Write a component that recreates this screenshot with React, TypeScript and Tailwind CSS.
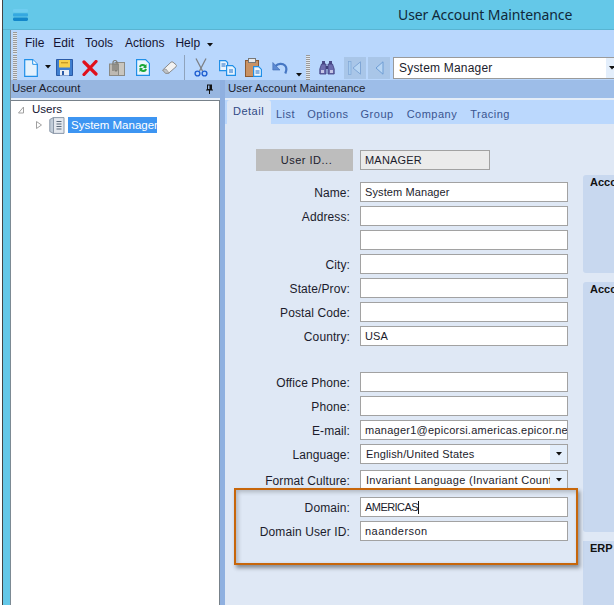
import React from "react";

const F = "font-['Liberation_Sans','Noto_Sans',sans-serif]";

function Grip({ h }: { h: string }) {
  return <div className={`w-[4px] ${h} bg-[repeating-linear-gradient(to_bottom,#9a9a9a_0,#9a9a9a_1px,#dfe6ee_1px,#dfe6ee_2px)]`} />;
}

function Caret({ className = "" }: { className?: string }) {
  return (
    <svg width="6" height="4" viewBox="0 0 6 4" className={className}>
      <path d="M0 0h6L3 3.5z" fill="#111" />
    </svg>
  );
}

const Doc = () => (
  <svg width="14" height="18" viewBox="0 0 14 18">
    <path d="M.7.7h8l4.6 4.6v12H.7z" fill="#e4f1fd" stroke="#1f8fe8" strokeWidth="1.2" />
    <path d="M8.7.7v4.6h4.6" fill="#fff" stroke="#1f8fe8" />
  </svg>
);
const Save = () => (
  <svg width="17" height="17" viewBox="0 0 17 17">
    <path d="M.5.5h16v16H.5z" fill="#3f7fd0" stroke="#2a5aa6" />
    <rect x="3" y="1" width="11" height="7.500" fill="#f6cf4a" />
    <rect x="5" y="3" width="7" height="1.400" fill="#c79a24" />
    <rect x="4" y="11" width="9" height="5.500" fill="#e8eef7" />
    <rect x="6" y="12" width="2" height="4" fill="#2a5aa6" />
  </svg>
);
const Del = () => (
  <svg width="16" height="16" viewBox="0 0 16 16">
    <path d="M2 2l12 12M14 1.500L2 14.500" stroke="#e0101c" strokeWidth="3.200" strokeLinecap="round" />
  </svg>
);
const Clip = () => (
  <svg width="16" height="17" viewBox="0 0 16 17">
    <rect x="6" y="3.500" width="9.500" height="13" fill="#c9c6bf" stroke="#8b8b85" />
    <rect x=".5" y="5" width="9" height="11.500" fill="#bdb9b2" stroke="#8b8b85" />
    <path d="M4 12V3.500a2 2 0 014 0V11a1 1 0 01-2 0V5" fill="none" stroke="#77766f" strokeWidth="1.200" />
  </svg>
);
const Refresh = () => (
  <svg width="14" height="17" viewBox="0 0 14 17">
    <path d="M.6.6h9l3.800 3.800v12H.6z" fill="#eaf5fd" stroke="#1f8fe8" strokeWidth="1.200" />
    <path d="M3 7.500a4 4 0 016.500-1.500l1-1v4H7l1.200-1.200A2.400 2.400 0 004.600 8.500z" fill="#1da83a" />
    <path d="M11 10.500a4 4 0 01-6.500 1.500l-1 1V9H7L5.800 10.200A2.400 2.400 0 009.400 9.500z" fill="#1da83a" />
  </svg>
);
const Eraser = () => (
  <svg width="15" height="13" viewBox="0 0 15 13">
    <path d="M.7 9L9 1.200a1.500 1.500 0 012 0l3 2.500a1.500 1.500 0 010 2.100L6.500 12.300H3.500z" fill="#f2f2f2" stroke="#8a8a8a" />
    <path d="M.7 9l3 3.300 3.500-.2L4 8z" fill="#bfc3c8" stroke="#8a8a8a" strokeWidth=".6" />
  </svg>
);
const Scissors = () => (
  <svg width="14" height="19" viewBox="0 0 14 19">
    <path d="M2 .5l6.500 12.500M12 .5L5.500 13" stroke="#7d8086" strokeWidth="1.300" fill="none" />
    <circle cx="3.500" cy="15.500" r="2.400" fill="none" stroke="#1f5fd0" strokeWidth="1.400" />
    <circle cx="10.500" cy="15.500" r="2.400" fill="none" stroke="#1f5fd0" strokeWidth="1.400" />
  </svg>
);
const Copy = () => (
  <svg width="17" height="16" viewBox="0 0 17 16">
    <path d="M.6.6h6l2 2v8H.6z" fill="#e8f3fd" stroke="#1f8fe8" strokeWidth="1.200" />
    <path d="M7.600 5.600h6l2.800 2.800v7H7.600z" fill="#e8f3fd" stroke="#1f8fe8" strokeWidth="1.200" />
    <path d="M2.500 4h4M2.500 6h4M10 10h4M10 12h4" stroke="#1f6fc8" />
  </svg>
);
const Paste = () => (
  <svg width="17" height="19" viewBox="0 0 17 19">
    <rect x=".5" y="2.500" width="13" height="16" fill="#c99264" stroke="#8a5a34" />
    <rect x="3.500" y=".5" width="7" height="4" fill="#e9e9e9" stroke="#777" />
    <path d="M8.600 8.600h5l2.800 2.800v7H8.600z" fill="#eef6fd" stroke="#1f8fe8" strokeWidth="1.200" />
    <path d="M10.500 13h4M10.500 15h4" stroke="#1f6fc8" />
  </svg>
);
const Undo = () => (
  <svg width="16" height="14" viewBox="0 0 16 14">
    <path d="M3.500 5C6 2.500 10.500 2 13 4.500c1.800 1.800 1.800 4.500.3 8" fill="none" stroke="#4677c4" strokeWidth="2.200" />
    <path d="M.8 1.500v7.500h7.200z" fill="#5d8ad2" stroke="#3e6ab4" strokeWidth=".6" />
  </svg>
);
const Binoculars = () => (
  <svg width="16" height="15" viewBox="0 0 16 15">
    <path d="M3 1h3v3H3zM10 1h3v3h-3z" fill="#4b4b88" />
    <path d="M2.500 4h4.500v10H.8v-5zM9 4h4.500l1.700 5v5H9z" fill="#6c6cae" stroke="#3d3d7c" strokeWidth=".8" />
    <path d="M7 6h2v3H7z" fill="#3d3d7c" />
    <path d="M2 10h3v3H2zM11 10h3v3h-3z" fill="#c6c6e6" />
  </svg>
);
const NavFirst = () => (
  <svg width="14" height="14" viewBox="0 0 14 14">
    <rect x=".5" y=".5" width="2.500" height="13" fill="#a8cdf0" stroke="#7fa6d6" strokeWidth=".7" />
    <path d="M12.500 .8v12.400L5 7z" fill="#b8d6f4" stroke="#7fa6d6" />
  </svg>
);
const NavPrev = () => (
  <svg width="9" height="14" viewBox="0 0 9 14">
    <path d="M8 .8v12.400L1 7z" fill="#b8d6f4" stroke="#6f9dd4" />
  </svg>
);
const Pin = () => (
  <svg width="7" height="10" viewBox="0 0 7 10">
    <path d="M1 .5h5v5H7v1H4V10H3V6.500H0v-1h1z" fill="#111" />
    <rect x="2" y="1.500" width="1.500" height="3.500" fill="#97b6e0" />
  </svg>
);
const Book = () => (
  <svg width="16" height="17" viewBox="0 0 16 17">
    <path d="M4 .6h11v15.800H4z" fill="#e4e8ee" stroke="#8b98a8" />
    <path d="M.8 2.500L4.500.6v15.800L.8 14.500z" fill="#c1ccd8" stroke="#8b98a8" />
    <path d="M7.500 4.500h5M7.500 7h5M7.500 9.500h5M7.500 12h5" stroke="#5a6878" />
  </svg>
);
const TreeTri = ({ open }: { open?: boolean }) => (
  <svg width="6" height="8" viewBox="0 0 6 8">
    {open ? <path d="M5.500 1v6H.5z" fill="none" stroke="#a0a0a0" /> : <path d="M.5.5L5.500 4 .5 7.500z" fill="#fff" stroke="#a0a0a0" />}
  </svg>
);
const AppIcon = () => (
  <svg width="15" height="12" viewBox="0 0 15 12">
    <rect x="0" y="0" width="15" height="3.300" rx="1.300" fill="#6fcdf0" />
    <rect x="0" y="4.300" width="15" height="3.300" rx="1" fill="#35a8e0" />
    <rect x="0" y="8.600" width="15" height="3.300" rx="1.300" fill="#1387ca" />
  </svg>
);

function Field({ label, value, textClass = "tracking-[0.15px]", children }: { label?: string; value?: string; textClass?: string; children?: React.ReactNode }) {
  return (
    <div className="flex items-center h-5">
      <div className="w-[125px] pt-[1px] text-right text-[12px] tracking-[0.1px] text-[#1c1c2c] whitespace-nowrap">{label}</div>
      <div className={`ml-[10px] w-[208px] h-5 bg-white border border-[#a2a2a2] pl-1 flex items-center text-[11px] text-[#1c1c2c] whitespace-nowrap overflow-hidden ${textClass}`}>
        {value}
        {children}
      </div>
    </div>
  );
}

function Select({ label, value, textClass = "tracking-[0.15px]" }: { label: string; value: string; textClass?: string }) {
  return (
    <div className="flex items-center h-5">
      <div className="w-[125px] pt-[1px] text-right text-[12px] tracking-[0.1px] text-[#1c1c2c] whitespace-nowrap">{label}</div>
      <div className={`ml-[10px] w-[208px] h-5 bg-white border border-[#a2a2a2] flex items-center text-[11px] text-[#1c1c2c] whitespace-nowrap ${textClass}`}>
        <div className="w-[189px] pl-[5px] overflow-hidden">{value}</div>
        <div className="flex-1 h-full bg-[#e3eefb] flex items-center justify-center">
          <Caret />
        </div>
      </div>
    </div>
  );
}

export default function App() {
  return (
    <div className={`relative w-[614px] h-[605px] overflow-hidden bg-white pl-[2px] ${F}`}>
      <div className="h-full border-l border-[#444444] bg-[#64c8e8] flex flex-col">
        <div className="h-[30px] shrink-0 flex items-center pl-[10px] border-b border-[#58b4d2]">
          <AppIcon />
          <div className="ml-[370px] text-[14px] tracking-[-0.1px] text-[#10283a] whitespace-nowrap font-['Noto_Sans',sans-serif]">
            User Account Maintenance
          </div>
        </div>
        <div className="flex-1 ml-[7px] border-l border-[#7c8a94] min-h-0 flex flex-col bg-[#dfe8f5]">
          {/* menu + toolbar */}
          <div className="h-[50px] shrink-0 bg-[#b9d7fd] flex flex-col">
            <div className="h-[25px] flex items-center pl-[2px] text-[12px] text-[#141432]">
              <Grip h="h-[22px]" />
              <span className="ml-[8px]">File</span>
              <span className="ml-[9px]">Edit</span>
              <span className="ml-[11px]">Tools</span>
              <span className="ml-[12px]">Actions</span>
              <span className="ml-[11px]">Help</span>
              <Caret className="ml-[7px] mt-[4px]" />
            </div>
            <div className="h-[25px] flex items-center pl-[2px]">
              <Grip h="h-[25px]" />
              <div className="ml-[7px]"><Doc /></div>
              <Caret className="ml-[7px] -mt-[2px]" />
              <div className="ml-[5px]"><Save /></div>
              <div className="ml-[9px]"><Del /></div>
              <div className="ml-[11px]"><Clip /></div>
              <div className="ml-[11px]"><Refresh /></div>
              <div className="ml-[12px]"><Eraser /></div>
              <div className="ml-[7px] w-px h-[26px] bg-[#8fa3bc]" />
              <div className="ml-[9px]"><Scissors /></div>
              <div className="ml-[11px]"><Copy /></div>
              <div className="ml-[9px]"><Paste /></div>
              <div className="ml-[10px]"><Undo /></div>
              <Caret className="ml-[8px] mt-[14px]" />
              <div className="ml-[4px]"><Grip h="h-[25px]" /></div>
              <div className="ml-[9px]"><Binoculars /></div>
              <div className="ml-[9px] w-[22px] h-[22px] bg-[#a9c6e8] flex items-center justify-center"><NavFirst /></div>
              <div className="ml-[2px] w-[22px] h-[22px] bg-[#a9c6e8] flex items-center justify-center"><NavPrev /></div>
              <div className="ml-[3px] flex-1 h-[22px] min-w-0 bg-white border border-[#9a9a9a] border-r-0 flex items-center">
                <span className="pl-[5px] text-[12px] tracking-[0.2px] text-[#1c1c2c] flex-1">System Manager</span>
                <div className="w-[8px] h-full bg-[#e3eefb] flex items-center overflow-hidden">
                  <Caret className="ml-[3px] shrink-0" />
                </div>
              </div>
            </div>
          </div>

          <div className="flex-1 min-h-0 flex">
            {/* left dock */}
            <div className="w-[209px] shrink-0 flex flex-col bg-[#97b6e0]">
              <div className="h-[18px] shrink-0 flex items-center justify-between pl-[1px] pr-[7px] text-[11.5px] text-[#1c1c2c]">
                <span>User Account</span>
                <Pin />
              </div>
              <div className="h-[2px] shrink-0 bg-[#e4edf8]" />
              <div className="flex-1 bg-white border-t border-r border-[#77818a] pt-[2px] text-[11.5px]">
                <div className="h-[14px] flex items-center pl-[7px] text-[#141432]">
                  <TreeTri open />
                  <span className="ml-[8px]">Users</span>
                </div>
                <div className="h-4 flex items-center pl-[25px] text-white">
                  <TreeTri />
                  <div className="ml-[7px]"><Book /></div>
                  <span className="ml-[3px] h-4 w-[89px] pl-[3px] bg-[#3d95f2] leading-4 whitespace-nowrap">System Manager</span>
                </div>
              </div>
            </div>
            <div className="w-[5px] shrink-0 bg-[#8fb0e0]" />
            {/* main */}
            <div className="flex-1 min-w-0 flex flex-col">
              <div className="h-[18px] shrink-0 bg-[#9dbde8] flex items-center pl-[3px] text-[11.5px] text-[#1c1c2c] whitespace-nowrap">
                User Account Maintenance
              </div>
              <div className="h-[2px] shrink-0 bg-[#e4edf8]" />
              <div className="h-[24px] shrink-0 bg-[#bbd8fd] flex items-end pl-[2px] text-[11px] tracking-[0.5px] text-[#3a5590]">
                <div className="w-[44px] h-[24px] bg-[#dfe8f5] rounded-t-[3px] pl-[6px] leading-[22px] text-[#2f4a86]">Detail</div>
                <span className="ml-[5px] h-[24px] leading-[28px]">List</span>
                <span className="ml-[12px] h-[24px] leading-[28px]">Options</span>
                <span className="ml-[12px] h-[24px] leading-[28px]">Group</span>
                <span className="ml-[13px] h-[24px] leading-[28px]">Company</span>
                <span className="ml-[13px] h-[24px] leading-[28px]">Tracing</span>
              </div>
              <div className="flex-1 min-h-0 flex">
                <div className="w-[358px] shrink-0 pt-[25px] flex flex-col">
                  <div className="flex items-center h-[22px] mb-[11px]">
                    <div className="ml-[31px] w-[97px] h-[22px] pl-[4px] bg-[#bdbdbd] text-center text-[11px] tracking-[0.5px] leading-[22px] text-[#1c1c2c]">User ID...</div>
                    <div className="ml-[7px] w-[130px] h-5 bg-[#ebebeb] border border-[#a2a2a2] pl-1 text-[11px] tracking-[0.2px] leading-[18px] text-[#1c1c2c]">MANAGER</div>
                  </div>
                  <div className="flex flex-col gap-1">
                    <Field label="Name:" value="System Manager" textClass="tracking-[0.1px]" />
                    <Field label="Address:" />
                    <Field />
                    <Field label="City:" />
                    <Field label="State/Prov:" />
                    <Field label="Postal Code:" />
                    <Field label="Country:" value="USA" />
                  </div>
                  <div className="mt-[26px] flex flex-col gap-1">
                    <Field label="Office Phone:" />
                    <Field label="Phone:" />
                    <Field label="E-mail:" value="manager1@epicorsi.americas.epicor.net" textClass="tracking-[0.25px]" />
                    <Select label="Language:" value="English/United States" />
                  </div>
                  <div className="mt-[6px]">
                    <Select label="Format Culture:" value="Invariant Language (Invariant Country)" textClass="tracking-[0.3px]" />
                  </div>
                  <div className="mt-[7px] flex flex-col gap-1">
                    <Field label="Domain:" value="AMERICAS" textClass="tracking-[-0.55px]">
                      <span className="w-px h-[13px] bg-[#111]" />
                    </Field>
                    <Field label="Domain User ID:" value="naanderson" textClass="tracking-[0.45px]" />
                  </div>
                </div>
                <div className="flex-1 min-w-0 pt-[51px] flex flex-col text-[11px] font-bold text-[#111] whitespace-nowrap">
                  <div className="h-[98px] shrink-0 bg-[#c8d8ef] rounded-l-[3px] pl-[7px] pt-[1px] leading-[12px] overflow-hidden">Account</div>
                  <div className="h-[250px] shrink-0 mt-[9px] bg-[#c8d8ef] rounded-l-[3px] pl-[7px] pt-[1px] leading-[12px] overflow-hidden">Account</div>
                  <div className="flex-1 mt-[9px] bg-[#c8d8ef] pl-[7px] pt-[1px] leading-[12px]">ERP</div>
                </div>
              </div>
            </div>
          </div>
        </div>
      </div>
      {/* highlight annotation over the form */}
      <div className="absolute left-[234px] top-[488px] w-[344px] h-[77px] border-[2.5px] border-[#c7660a] shadow-[2px_3px_4px_rgba(0,0,0,0.4),inset_2px_2px_4px_rgba(0,0,0,0.22)]" />
    </div>
  );
}
